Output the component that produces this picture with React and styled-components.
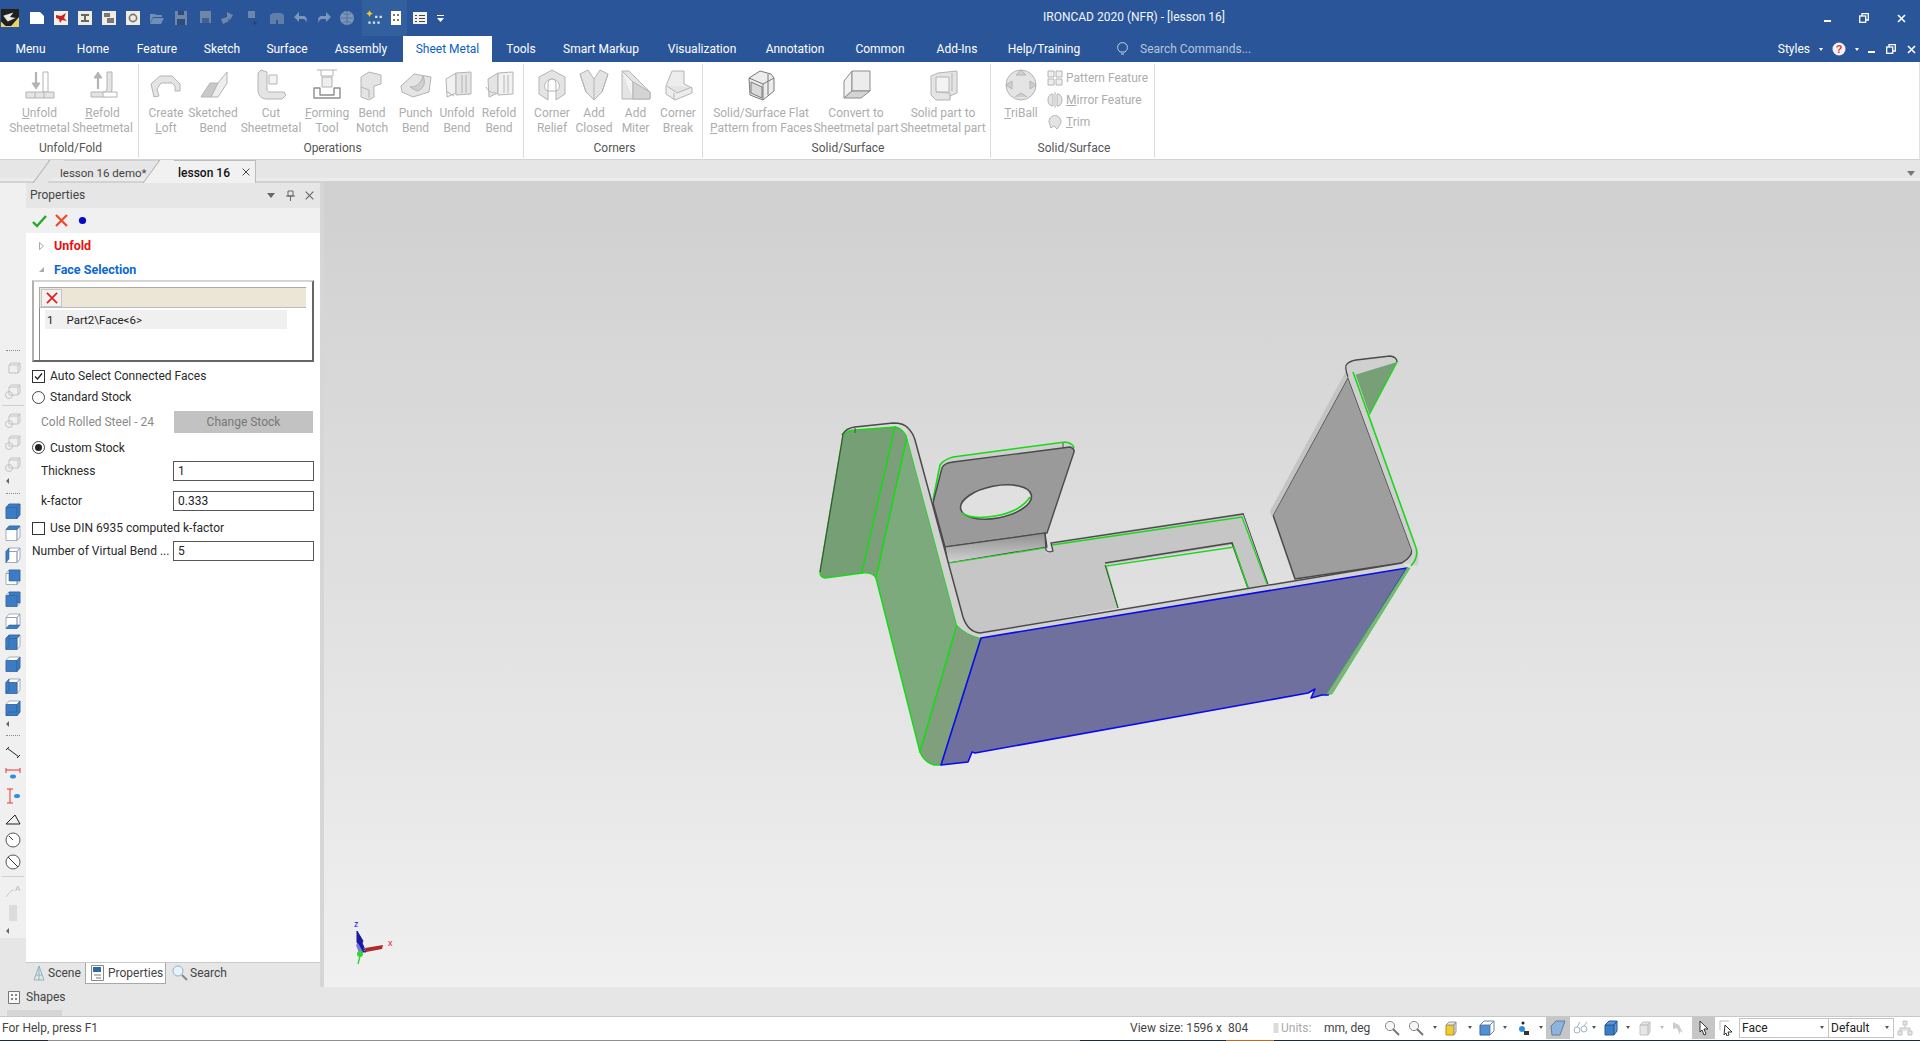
import React from 'react'
import styled, { createGlobalStyle } from 'styled-components'

const GlobalStyle = createGlobalStyle`
  html, body { margin: 0; padding: 0; height: 100%; overflow: hidden; }
  body { font-family: Roboto, "Liberation Sans", sans-serif; font-size: 12px; color: #222; }
  #root { height: 100%; }
  * { box-sizing: border-box; }
  svg { display: block; flex: none; }
`

const Page = styled.div`
  height: 100vh;
  display: flex;
  flex-direction: column;
  background: #e6e6e6;
`

/* ---------- title bar ---------- */
const TitleBar = styled.div`
  height: 36px;
  flex: none;
  display: flex;
  align-items: center;
  background: #2a5699;
  color: #fff;
`
const QuickBar = styled.div`
  display: flex;
  align-items: center;
  height: 36px;
  width: 1043px;
`
const QuickSlot = styled.div`
  width: ${p => p.$w || 24}px;
  height: ${p => (p.$on ? 36 : 24)}px;
  display: flex;
  align-items: center;
  justify-content: center;
  background: ${p => (p.$on ? '#32609f' : 'transparent')};
  margin-right: ${p => p.$mr || 0}px;
`
const WindowTitle = styled.div`
  flex: 1;
  font-size: 12px;
  color: #f2f5fa;
  padding-bottom: 2px;
`
const WinButtons = styled.div`
  display: flex;
  align-items: center;
  gap: ${p => p.$gap}px;
  padding-right: ${p => p.$right}px;
`

/* ---------- menu tabs ---------- */
const TabRow = styled.div`
  height: 26px;
  flex: none;
  display: flex;
  align-items: stretch;
  background: #2a5699;
`
const MenuTab = styled.div`
  width: ${p => p.$w}px;
  flex: none;
  display: flex;
  align-items: center;
  justify-content: center;
  font-size: 12px;
  color: ${p => (p.$active ? '#0a5fc4' : '#fff')};
  background: ${p => (p.$active ? '#fff' : 'transparent')};
`
const SearchBox = styled.div`
  display: flex;
  align-items: center;
  gap: 12px;
  margin-left: 21px;
  color: #b5c4dc;
  font-size: 12px;
  flex: 1;
`
const StylesBox = styled.div`
  display: flex;
  align-items: center;
  color: #fff;
  padding-right: 4px;
`

/* ---------- ribbon ---------- */
const Ribbon = styled.div`
  height: 98px;
  flex: none;
  display: flex;
  background: #fff;
  border-bottom: 1px solid #d2d2d2;
  border-right: 1px solid #e2e2e2;
  padding: 2px 0 1px;
`
const RibbonGroup = styled.div`
  width: ${p => p.$w}px;
  flex: none;
  display: flex;
  flex-direction: column;
  border-right: 1px solid #dcdcdc;
`
const GroupBody = styled.div`
  flex: 1;
  display: flex;
  padding-left: ${p => p.$left}px;
`
const GroupLabel = styled.div`
  height: 18px;
  padding-left: 3px;
  text-align: center;
  color: #555;
  font-size: 12px;
  line-height: 16px;
`
const BigButton = styled.div`
  width: ${p => p.$w}px;
  flex: none;
  display: flex;
  flex-direction: column;
  align-items: center;
  padding-top: 5px;
  color: #adadad;
  font-size: 12px;
  line-height: 15px;
  text-align: center;
  white-space: nowrap;
  svg { margin-bottom: 5px; }
`
const SmallColumn = styled.div`
  display: flex;
  flex-direction: column;
  gap: 6px;
  padding-top: 6px;
  margin-left: 4px;
`
const SmallButton = styled.div`
  display: flex;
  align-items: center;
  gap: 3px;
  height: 16px;
  color: #adadad;
  white-space: nowrap;
`

/* ---------- document tabs ---------- */
const DocBar = styled.div`
  height: 23px;
  flex: none;
  position: relative;
  display: flex;
  padding-left: 48px;
  background: linear-gradient(#e6e6e6 0 18px, #ececec 18px 21px, #d2d2d2 21px);
`
const DocTab = styled.div`
  position: relative;
  height: 23px;
  width: ${p => p.$w}px;
  display: flex;
  align-items: center;
  padding-left: ${p => p.$pad}px;
  padding-top: 1px;
  font-size: ${p => (p.$active ? 12 : 11.5)}px;
  color: ${p => (p.$active ? '#111' : '#444')};
  font-weight: ${p => (p.$active ? 500 : 400)};
  background: ${p => (p.$active ? '#f1f1f1' : 'transparent')};
  border-top: 1px solid ${p => (p.$active ? '#bdbdbd' : '#cfcfcf')};
  border-right: 1px solid ${p => (p.$active ? '#bdbdbd' : 'transparent')};
  &::before {
    content: '';
    position: absolute;
    left: -7px;
    top: -1px;
    width: 14px;
    height: 23px;
    background: ${p => (p.$active ? '#f1f1f1' : '#e6e6e6')};
    border-left: 1px solid #aaa;
    transform: skewX(-36deg);
    z-index: 0;
  }
  span { position: relative; z-index: 1; }
`
const DocClose = styled.div`
  position: absolute;
  right: 5px;
  top: 7px;
`
const DocMenu = styled.div`
  position: absolute;
  right: 5px;
  top: 11px;
  width: 0;
  height: 0;
  border-left: 4px solid transparent;
  border-right: 4px solid transparent;
  border-top: 5px solid #777;
`

/* ---------- main ---------- */
const Main = styled.div`
  flex: 1;
  min-height: 0;
  display: flex;
`
const Dock = styled.div`
  width: 324px;
  flex: none;
  display: flex;
  border-right: 4px solid #d6d6d6;
  background: #e6e6e6;
`
const SideBar = styled.div`
  width: 26px;
  flex: none;
  height: 755px;
  background: #f0f0f0;
  display: flex;
  flex-direction: column;
  align-items: center;
  padding-top: 167px;
`
const SideSlot = styled.div`
  height: 22px;
  display: flex;
  align-items: center;
  justify-content: center;
`
const SideDots = styled.div`
  width: 14px;
  height: ${p => p.$h || 8}px;
  flex: none;
  border-top: 1px dotted #8a8a8a;
  margin-top: ${p => p.$top || 0}px;
`
const SideRule = styled.div`
  width: 22px;
  height: 1px;
  flex: none;
  margin: 3px 0;
  background: #cfcfcf;
`
const SideArrow = styled.div`
  width: 14px;
  height: ${p => p.$h || 14}px;
  flex: none;
  display: flex;
  align-items: center;
  &::before {
    content: '';
    border-top: 3px solid transparent;
    border-bottom: 3px solid transparent;
    border-right: 3px solid #666;
  }
`
const Panel = styled.div`
  flex: 1;
  min-width: 0;
  display: flex;
  flex-direction: column;
`
const PanelHead = styled.div`
  height: 25px;
  flex: none;
  display: flex;
  align-items: center;
  padding: 0 6px 1px 4px;
  color: #444;
  background: #e6e6e6;
`
const PanelName = styled.div`
  flex: 1;
`
const PanelTools = styled.div`
  display: flex;
  align-items: center;
  gap: 10px;
`
const ConfirmRow = styled.div`
  height: 25px;
  flex: none;
  display: flex;
  align-items: center;
  gap: 8px;
  padding-left: 6px;
  background: #f0f0f0;
`
const PanelBody = styled.div`
  flex: 1;
  background: #fff;
  padding: 0 6px;
  display: flex;
  flex-direction: column;
`
const Section = styled.div`
  height: ${p => p.$h}px;
  flex: none;
  display: flex;
  align-items: center;
  padding-left: 7px;
  gap: 10px;
  font-weight: 700;
  font-size: 12.5px;
  color: ${p => p.$color};
`
const Tri = styled.div`
  width: 5px;
  height: 8px;
`
const SelectBox = styled.div`
  height: 82px;
  width: 282px;
  flex: none;
  border: 2px solid;
  border-color: #d4d4d4 #666 #666 #b0b0b0;
  padding: 5px 6px 0 5px;
  margin-bottom: 3px;
  display: flex;
  flex-direction: column;
`
const SelectTools = styled.div`
  height: 21px;
  flex: none;
  background: #ece6d6;
  border-top: 1px solid #aaa;
  border-bottom: 1px solid #bbb;
  border-left: 1px solid #aaa;
  padding: 1px;
`
const SelectDelete = styled.div`
  width: 21px;
  height: 18px;
  background: #f2f2f2;
  border: 1px solid #c4c4c4;
  display: flex;
  align-items: center;
  justify-content: center;
`
const SelectList = styled.div`
  flex: 1;
  border-left: 1px solid #888;
  padding: 2px 0 0 5px;
`
const SelectRow = styled.div`
  width: 242px;
  height: 19px;
  display: flex;
  align-items: center;
  gap: 13px;
  padding-left: 2px;
  background: #f0f0f0;
  color: #222;
  font-size: 11.5px;
`
const OptionRow = styled.div`
  height: ${p => p.$h || 21}px;
  flex: none;
  display: flex;
  align-items: center;
  gap: 5px;
  color: #2a2a2a;
`
const CheckBox = styled.div`
  width: 13px;
  height: 13px;
  border: 1px solid #333;
  background: #fff;
  display: flex;
  align-items: center;
  justify-content: center;
`
const Radio = styled.div`
  width: 13px;
  height: 13px;
  border-radius: 50%;
  border: 1px solid #444;
  background: #fff;
  display: flex;
  align-items: center;
  justify-content: center;
  &::after {
    content: '';
    width: 7px;
    height: 7px;
    border-radius: 50%;
    background: ${p => (p.$on ? '#222' : 'transparent')};
  }
`
const FieldRow = styled.div`
  height: ${p => p.$h}px;
  flex: none;
  display: flex;
  align-items: center;
`
const FieldName = styled.div`
  width: 141px;
  flex: none;
  padding-left: ${p => p.$left ?? 9}px;
  color: ${p => (p.$muted ? '#8a8a8a' : '#2a2a2a')};
  white-space: nowrap;
`
const FieldInput = styled.div`
  width: 141px;
  height: 20px;
  border: 1px solid #555;
  padding-left: 4px;
  line-height: 18px;
  background: #fff;
`
const GreyButton = styled.div`
  width: 139px;
  height: 22px;
  margin-left: 1px;
  background: #c2c2c2;
  color: #777;
  text-align: center;
  line-height: 22px;
`
const DockTabs = styled.div`
  height: 25px;
  flex: none;
  display: flex;
  align-items: flex-start;
  background: #e6e6e6;
  border-top: 1px solid #c9c9c9;
`
const DockTab = styled.div`
  height: 21px;
  width: ${p => p.$w}px;
  display: flex;
  align-items: center;
  gap: ${p => p.$gap || 4}px;
  padding-left: ${p => p.$left}px;
  color: #444;
  background: ${p => (p.$active ? '#fff' : 'transparent')};
  border: 1px solid ${p => (p.$active ? '#a9a9a9' : 'transparent')};
  border-top: none;
`
const Viewport = styled.div`
  flex: 1;
  min-width: 0;
  background: linear-gradient(#d0d0d0, #f0f0f0);
  svg { width: 100%; height: 100%; }
`
const ShapesBar = styled.div`
  height: 29px;
  flex: none;
  position: relative;
  display: flex;
  align-items: flex-start;
  gap: 4px;
  padding: 3px 0 0 8px;
  color: #444;
  background: #e6e6e6;
  &::after {
    content: '';
    position: absolute;
    left: 7px;
    bottom: 0;
    width: 55px;
    height: 6px;
    background: #d6d6d6;
  }
`
const StatusBar = styled.div`
  height: 24px;
  flex: none;
  display: flex;
  align-items: center;
  background: #fff;
  border-top: 1px solid #c8c8c8;
  color: #333;
  padding: 0 0 2px 2px;
`
const StatusText = styled.div`
  width: ${p => p.$w}px;
  flex: none;
  white-space: nowrap;
  color: ${p => (p.$muted ? '#aaa' : '#444')};
  margin-left: ${p => p.$left || 0}px;
`
const StatusSlot = styled.div`
  width: ${p => p.$w}px;
  height: 22px;
  flex: none;
  display: flex;
  align-items: center;
  justify-content: center;
  background: ${p => (p.$on ? '#c6c6c6' : 'transparent')};
`
const Caret = styled.div`
  width: ${p => p.$w || 8}px;
  flex: none;
  display: flex;
  justify-content: center;
  &::before {
    content: '';
    border-left: ${p => p.$size || 2}px solid transparent;
    border-right: ${p => p.$size || 2}px solid transparent;
    border-top: ${p => (p.$size || 2) + 1}px solid ${p => p.$color || '#555'};
  }
`
const Combo = styled.div`
  width: ${p => p.$w}px;
  height: 20px;
  flex: none;
  display: flex;
  align-items: center;
  justify-content: space-between;
  padding: 0 3px 0 2px;
  border: 1px solid #c4c4c4;
  border-left-width: ${p => (p.$join ? 0 : 1)}px;
  color: #222;
`
const Taskbar = styled.div`
  height: 1px;
  flex: none;
  background: linear-gradient(90deg, #1c2b36 48px, #8b9095 48px, #8b9095 1080px, #1c2b36 1080px, #1c2b36 1226px, #c46a1e 1226px, #c46a1e 1274px, #1c2b36 1274px);
`

/* ---------- small drawings ---------- */
const Box = ({ s = 16, children, v = 16 }) => (
  <svg width={s} height={s} viewBox={`0 0 ${v} ${v}`}>{children}</svg>
)

const quick = {
  logo: (
    <Box s={18}>
      <rect width="16" height="16" fill="#e9d46a" />
      <path d="M0 0h16v7L9 15H4L0 11z" fill="#20201e" />
      <path d="M2 6l9-3-3 4 5 1-7 3z" fill="#e8e8e8" />
    </Box>
  ),
  sheet: <Box><path d="M1 2h10l4 4v8H1z" fill="#fff" /></Box>,
  star: <Box><path d="M1 1h14v14H1z" fill="#f3f0e6" /><path d="M3 5l5 1 5-3-2 5 3 3-5-1-2 3-1-4-3-1z" fill="#d01c24" /></Box>,
  part: <Box><path d="M1 1h14v14H1z" fill="#efece2" /><path d="M4 4h8v2H9v4h3v2H4v-2h3V6H4z" fill="#666" /></Box>,
  drw: <Box><path d="M1 1h14v14H1z" fill="#efece2" /><path d="M3 3h6v4H3zM6 8h7v5H6z" fill="#777" /></Box>,
  cog: <Box><path d="M1 1h14v14H1z" fill="#efece2" /><circle cx="8" cy="8" r="3.6" fill="none" stroke="#777" strokeWidth="1.6" /></Box>,
  open: <Box><path d="M1 4h5l1 1h6v2H4L1 13z M4 8h11l-3 6H1z" fill="#6f8fb9" /></Box>,
  save: <Box><path d="M2 1h12v14H2z" fill="#6d86a9" /><path d="M5 1h6v4H5zM4 9h8v6H4z" fill="#2c4c79" /></Box>,
  saveAll: <Box><path d="M3 1h11v12H3z" fill="#6d86a9" /><path d="M5 8h7v5H5z" fill="#3e618f" /></Box>,
  plot: <Box><path d="M1 9l6-2 2 4-6 3zM7 2l6 3-3 5-3-2z" fill="#6d86a9" /></Box>,
  print: <Box><path d="M5 1h7v7H5z" fill="#6d86a9" /><path d="M12 11v4M10 13h4" stroke="#27406b" /></Box>,
  shop: <Box><path d="M1 5l3-2h8l3 2v9H9v-4H7v4H1z" fill="#5f7ea9" /></Box>,
  undo: <Box><path d="M6 2L1 7l5 5V9h4c2 0 3 1 3 4 2-5 0-7-3-7H6z" fill="#7b96bb" /></Box>,
  redo: <Box><path d="M10 2l5 5-5 5V9H6c-2 0-3 1-3 4-2-5 0-7 3-7h4z" fill="#7b96bb" /></Box>,
  globe: <Box><circle cx="8" cy="8" r="7" fill="#7b96bb" /><path d="M2 8h12M8 1v14M4 3c3 2 5 2 8 0M4 13c3-2 5-2 8 0" stroke="#54739f" fill="none" /></Box>,
  spark: <Box s={18}><path d="M4 1l1 2 2 1-2 1-1 2-1-2-2-1 2-1z" fill="#f2c521" /><path d="M9 6h2v2H9zM13 6h2v2h-2zM7 11h2v2H7zM11 11h2v2h-2zM3 11h2v2H3z" fill="#d9e6f6" /></Box>,
  grid: <Box><path d="M3 1h10v14H3z" fill="#fff" /><path d="M5 4h2v2H5zM9 4h2v2H9zM5 9h2v2H5zM9 9h2v2H9z" fill="#777" /></Box>,
  list: <Box><path d="M1 2h14v12H1z" fill="#f2f2f2" /><path d="M3 5h2v1H3zM7 5h6v1H7zM3 8h2v1H3zM7 8h6v1H7zM3 11h2v1H3zM7 11h6v1H7z" fill="#444" /></Box>,
}

const Quick = [
  ['logo', 20, 5], ['sheet', 24], ['star', 24], ['part', 24], ['drw', 24], ['cog', 24], ['open', 24], ['save', 24],
  ['saveAll', 24], ['plot', 22], ['print', 24, 2], ['shop', 24], ['undo', 23], ['redo', 24], ['globe', 22, 4],
].map(([name, w, mr]) => ({ name, w, mr }))

const leftTabs = [['Menu', 61], ['Home', 64], ['Feature', 64], ['Sketch', 66], ['Surface', 64], ['Assembly', 84]]
const rightTabs = [['Tools', 58], ['Smart Markup', 102], ['Visualization', 100], ['Annotation', 86], ['Common', 84], ['Add-Ins', 70], ['Help/Training', 104]]

const WinMin = ({ c = '#fff' }) => <svg width="7" height="10" viewBox="0 0 7 10"><rect y="7" width="7" height="2" fill={c} /></svg>
const WinRestore = () => (
  <svg width="10" height="10" viewBox="0 0 10 10" fill="none" stroke="#fff" strokeWidth="1.3">
    <rect x=".7" y="3" width="6" height="6.3" /><path d="M3 3V.7h6.3V7H7" />
  </svg>
)
const WinClose = () => (
  <svg width="9" height="9" viewBox="0 0 9 9" stroke="#fff" strokeWidth="1.6"><path d="M1 1l7 7M8 1L1 8" /></svg>
)

const L = { fill: '#e4e4e4', stroke: '#b4b4b4', strokeWidth: 1, strokeLinejoin: 'round' }
const Big = ({ children }) => <svg width="32" height="32" viewBox="0 0 32 32" {...L}>{children}</svg>

const big = {
  unfold: <Big><path d="M12 3v14" strokeWidth="2.2" fill="none" /><path d="M8 14l4 6 4-6z" fill="#b4b4b4" /><path d="M19 3h5v20h-5z" fill="#fff" /><path d="M2 23h28v6H2z" /><path d="M11 23v6M20 23v6" /></Big>,
  refold: <Big><path d="M11 20V6" strokeWidth="2.2" fill="none" /><path d="M7 9l4-6 4 6z" fill="#b4b4b4" /><path d="M20 3h5v16c0 6-3 9-9 9H4v-5h12c3 0 4-1 4-4z" /><path d="M16 23h14v5H16z" fill="#fff" /></Big>,
  loft: <Big><path d="M1 15l9-8h12l8 8v7h-5v-5l-3-3H11l-4 6 2 7-5 1z" /><path d="M22 7l8 8" /></Big>,
  sketched: <Big><path d="M4 28l9-14h8l-7 14z" fill="#c9c9c9" /><path d="M21 14l9-11v11l-9 14h-7z" fill="#eee" /></Big>,
  cut: <Big><path d="M6 1l6 2v17c0 2 1 3 3 3h14l2 3-4 4H12c-6 0-9-4-9-9V4z" /><path d="M14 6h8v9h-8z" fill="#f4f4f4" /></Big>,
  forming: <Big><path d="M6 1h20M10 1v6h12V1" fill="none" /><path d="M11 8h10v10H11z" fill="#efefef" /><path d="M3 19h6v7h14v-7h6v10H3z" fill="#fff" stroke="#8e8e8e" strokeWidth="1.4" /></Big>,
  notch: <Big><path d="M5 8l8-5 12 3v9l-7 2v11l-5 3-8-3z" /><path d="M5 18l8 3v8" /></Big>,
  punch: <Big><path d="M1 17L14 5l17 3-2 15-16 5L2 23z" /><path d="M10 18c6 0 11-3 13-11 3 7 1 13-6 15z" fill="#cfcfcf" /></Big>,
  unfoldBend: <Big><path d="M5 10l10-6v20l-9 4z" fill="#f1f1f1" /><path d="M15 4l15-1v22l-15 1z" /><path d="M5 22l8 5M21 6v18M25 6v18" /></Big>,
  refoldBend: <Big><path d="M5 10l10-6v20l-9 4z" /><path d="M15 4l15-1v22l-15 1z" fill="#f1f1f1" /><path d="M3 18c2 4 5 6 10 6" fill="none" /><path d="M21 6v18M25 6v18" /></Big>,
  relief: <Big><path d="M16 1l13 7v17l-9 6v-9c3-1 4-4 3-7s-4-5-7-5-6 2-7 5 0 6 3 7v9L3 25V8z" /><path d="M12 14a4 4 0 018 0v8h-8z" fill="#fff" /></Big>,
  closed: <Big><path d="M2 5l8-4 6 9 6-9 8 4-6 18-8 8-8-8z" /><path d="M16 10v21M2 5l6 18M30 5l-6 18" /></Big>,
  miter: <Big><path d="M2 2h7l21 21v7H2z" /><path d="M2 2l11 11v17" fill="#f3f3f3" /><path d="M13 13l17 10v7H13z" fill="#d4d4d4" /></Big>,
  corner: <Big><path d="M10 2h12v13l8 4v5l-17 7-9-6v-8z" fill="#ededed" /><path d="M5 17l10 7 15-6M12 24v7" /></Big>,
  flat: <Big stroke="#777"><path d="M4 9l11-7 11 3 3 4v13L18 31 5 26z" stroke="#7a7a7a" fill="#ececec" /><path d="M4 9l14 6v16M18 15l11-6M23 5v21" stroke="#7a7a7a" fill="none" /><path d="M6 13l11 5v11L6 24z" fill="#dadada" stroke="#7a7a7a" /></Big>,
  convert: <Big><path d="M4 12L12 2v20l-8 7z" fill="#f1f1f1" stroke="#8d8d8d" /><path d="M12 2h18v20H12z" fill="#ececec" stroke="#8d8d8d" /><path d="M4 29h17l9-7H12z" fill="#d4d4d4" stroke="#8d8d8d" /></Big>,
  solid: <Big><path d="M4 7l7-3 19-2v22l-7 3v4H9L4 26z" /><path d="M9 8h13v15H9zM25 4v18" fill="#f3f3f3" /><path d="M9 23l14 1v6" /></Big>,
  triball: <Big><circle cx="16" cy="16" r="15" /><path d="M16 1l5 5h-10zM1 16l6-4v8zM31 16l-6-4v8zM10 28l6-4 6 4" fill="#cfcfcf" /></Big>,
}

const Small = ({ kind }) => (
  <svg width="16" height="16" viewBox="0 0 16 16" {...L}>
    {kind === 'pattern' && <path d="M1 1h6v6H1zM9 1h6v6H9zM1 9h6v6H1zM9 9h6v6H9z" fill="#eee" />}
    {kind === 'mirror' && <path d="M1 8c0-4 2-6 5-6v12c-3 0-5-2-5-6zM15 8c0-4-2-6-5-6v12c3 0 5-2 5-6zM8 0v16" />}
    {kind === 'trim' && <path d="M2 8a6 6 0 1 1 10 4l-2 3-3-3-3 2z" />}
  </svg>
)

const faces = {
  back: 'M4 1h11v11H4z',
  left: 'M1 4.500L4 1v11l-3 3.500z',
  bottom: 'M1 15.500L4 12h11l-3 3.500z',
  front: 'M1 4.500h11v11H1z',
  top: 'M1 4.500L4 1h11l-3 3.500z',
  right: 'M12 4.500L15 1v11l-3 3.500z',
}
// blue faces of the little view cubes
const Cube = ({ on }) => (
  <svg width="16" height="16" viewBox="0 0 16 16" strokeLinejoin="round">
    <path d="M1 4.500h11v11H1zM12 4.500L15 1v11l-3 3.500zM1 4.500L4 1h11l-3 3.500z" fill="#fff" stroke="#8f9db0" strokeWidth=".8" />
    {on.map(f => <path key={f} d={faces[f]} fill="#3b7cc4" stroke="#2f5f9a" strokeWidth=".6" />)}
  </svg>
)
const GhostCube = ({ circle }) => (
  <svg width="16" height="16" viewBox="0 0 16 16" fill="none" stroke="#c2c2c2">
    <path d="M4 4h9v8H4zM4 4l2-2h9l-2 2M13 12l2-2V2" />
    {circle && <circle cx="4" cy="12" r="3.5" />}
  </svg>
)

const sideTop = [<GhostCube key="a" />, <GhostCube key="b" circle />]
const sideMid = [<GhostCube key="a" circle />, <GhostCube key="b" circle />, <GhostCube key="c" circle />]
const sideCubes = [
  ['front', 'top', 'right'], ['top'], ['left'], ['back'], ['back', 'front'], ['bottom'],
  ['front', 'top', 'left'], ['front', 'right'], ['front', 'left'], ['front', 'right', 'bottom'],
]

const dimIcons = [
  <Box key="1"><path d="M2 4l12 9M1 6l3-3M12 14l3-3" stroke="#222" fill="none" /></Box>,
  <Box key="2"><path d="M1 4h14M1 2v5M15 2v5" stroke="#e33" fill="none" /><ellipse cx="8" cy="10.5" rx="3" ry="2" fill="#2e8fe0" /></Box>,
  <Box key="3"><path d="M5 1v14M2 1h6M2 15h6" stroke="#e33" fill="none" /><ellipse cx="12" cy="8" rx="3" ry="2" fill="#2e8fe0" /></Box>,
  <Box key="4"><path d="M1 14h14M1 14L10 5l5 9" stroke="#222" fill="none" /></Box>,
  <Box key="5"><circle cx="8" cy="8" r="7" fill="#fff" stroke="#555" /><path d="M8 8L4 4" stroke="#333" /></Box>,
  <Box key="6"><circle cx="8" cy="8" r="7" fill="#fff" stroke="#555" /><path d="M3 3l10 10" stroke="#333" /></Box>,
]

const Tick = () => (
  <svg width="15" height="14" viewBox="0 0 15 14"><path d="M1 8l4 4L14 2" fill="none" stroke="#26a828" strokeWidth="2.4" /></svg>
)
const Cross = ({ s = 13, w = 2.2, c = '#ec4a2c' }) => (
  <svg width={s} height={s} viewBox="0 0 13 13"><path d="M1 1l11 11M12 1L1 12" stroke={c} strokeWidth={w} /></svg>
)

/* ---------- the part in the viewport, in page coordinates ---------- */
const GR = '#19d819'
const DK = '#4a4a4a'
const BL = '#0a0aee'

const Model = () => (
  <svg viewBox="324 183 1596 804" preserveAspectRatio="none">
    <defs>
      <linearGradient id="bend" x1="0" y1="0" x2="0" y2="1">
        <stop offset="0" stopColor="#8f8f8f" />
        <stop offset="1" stopColor="#d2d2d2" />
      </linearGradient>
    </defs>

    {/* rear lip of the tab */}
    <path d="M933 503L940 465Q943 460 953 457L1065 442Q1073 443 1073 447L1074 452L942 468z" fill="#d0d0d0" />
    <path d="M933 500L940 465Q943 460 953 457L1065 442Q1073 443 1074 448" fill="none" stroke={GR} strokeWidth="1.6" />
    <path d="M1063 443v5" stroke={DK} />

    {/* tab with the hole */}
    <path d="M942 468Q944 463 953 462L1070 447Q1075 449 1074 452L1047 533L945 547L933 503z" fill="#9a9a9a" stroke={DK} strokeWidth="1.4" strokeLinejoin="round" />
    <ellipse cx="996" cy="502" rx="36" ry="16" transform="rotate(-11 996 502)" fill="#e0e0e0" stroke={DK} strokeWidth="1.6" />
    <path d="M962 513Q972 520 995 516Q1020 512 1030 497" fill="none" stroke={GR} strokeWidth="1.6" />
    <path d="M945 547L1045 533L1047 547L948 563z" fill="url(#bend)" stroke={DK} strokeWidth="1.2" />

    {/* floor with the cut outs */}
    <path d="M948 563L1045 548L1046 552Q1047 553 1052 552L1050 542L1243 513L1268 584L1248 588L1232 545L1105 565L1118 608L980 633Q968 632 963 617z" fill="#c6c6c6" />
    <path d="M950 563L1045 548" stroke={GR} strokeWidth="1.2" fill="none" />
    <path d="M1045 533L1046 550Q1048 553 1053 551L1051 543L1243 514" fill="none" stroke={DK} strokeWidth="1.3" />
    <path d="M1052 545L1242 517L1267 584" fill="none" stroke={GR} strokeWidth="1.3" />
    <path d="M1243 513L1268 584" fill="none" stroke={DK} strokeWidth="1" />
    <path d="M1105 563L1232 543L1248 588" fill="none" stroke={DK} strokeWidth="1.6" />
    <path d="M1248 588L1234 547L1106 566L1118 608" fill="none" stroke={GR} strokeWidth="1.3" />
    <path d="M1105 565L1118 608" fill="none" stroke={DK} strokeWidth="1" />

    {/* right flange */}
    <path d="M1348 377L1273 515L1295 579L1402 563Q1412 557 1412 550z" fill="#9e9e9e" stroke={DK} strokeWidth="1.5" strokeLinejoin="round" />
    <path d="M1272 517L1270 511L1346 371Q1347 366 1348 377z" fill="#c4c4c4" />
    <path d="M1353 368L1397 362L1368 417z" fill="#77a077" stroke={GR} strokeWidth="1.3" />
    <path d="M1348 377Q1344 366 1347 364Q1350 361 1356 360L1390 356Q1397 357 1397 362" fill="#d0d0d0" stroke={DK} strokeWidth="1.3" />
    <path d="M1348 377L1412 550Q1414 556 1404 563L1418 566Q1420 552 1416 547L1354 370z" fill="#d0d0d0" />
    <path d="M1353 372L1415 545Q1420 556 1411 566" fill="none" stroke={GR} strokeWidth="1.6" />

    {/* green outer faces */}
    <path d="M843 435Q848 430 855 430L895 427L862 573L825 578Q820 577 820 572z" fill="#769f76" stroke={GR} strokeWidth="1.5" />
    <path d="M895 427Q902 428 907 437L876 578Q873 572 862 573z" fill="#7c9e7a" stroke={GR} strokeWidth="1.3" />
    <path d="M907 437L957 625L920 752L876 578z" fill="#7caa7c" stroke={GR} strokeWidth="1.5" strokeLinejoin="round" />
    <path d="M957 625Q965 634 981 638L941 765H934Q924 762 920 752z" fill="#7f9f7d" stroke={GR} strokeWidth="1.4" />
    <path d="M843 435L820 572" stroke={DK} strokeWidth="1.2" fill="none" />

    {/* front lip and curved corner */}
    <path d="M907 437L957 625Q965 634 981 638L1407 568L1402 563L980 633Q968 632 963 617L915 440Q912 431 907 428z" fill="#d2d2d2" />
    <path d="M842 435Q846 428 855 427L893 423Q904 423 908 428Q913 433 915 440L963 617Q968 632 980 633L1402 563" fill="none" stroke={DK} strokeWidth="1.5" />
    <path d="M855 428v5" stroke={DK} />

    {/* blue face */}
    <path d="M1407 568L1328 695H1322L1311 698L1315 689L1308 693L975 753L972 752L968 762L941 765L981 638z" fill="#70709f" stroke={BL} strokeWidth="1.6" strokeLinejoin="round" />
    <path d="M1410 568L1332 694H1327L1407 568z" fill="#8bab89" stroke={GR} strokeWidth=".7" />

    {/* triad */}
    <path d="M357 931l6 10-1 2 4 9-5 0-4-10z" fill="#1b1b9a" stroke="#1b1b9a" />
    <path d="M358 943l5 9-4 1-3-8z" fill="#7a7ae0" />
    <path d="M364 948l1 6" stroke="#aaa" strokeDasharray="1 1" />
    <path d="M365 948l18-3 -1 4 -16 3z" fill="#b02a2a" />
    <circle cx="360" cy="954" r="3" fill="#2ed82e" />
    <path d="M360 956l-2 8" stroke="#2ed82e" strokeWidth="1.4" />
    <text x="354" y="927" fontSize="9" fontFamily="Liberation Sans, sans-serif" fill="#1414e0">z</text>
    <text x="388" y="946" fontSize="9" fontFamily="Liberation Sans, sans-serif" fill="#e02020">x</text>
  </svg>
)

const statusIcon = {
  mag: <Box><circle cx="6" cy="6" r="4.6" fill="#f4f6f8" stroke="#8a8a8a" /><path d="M9 9l6 6" stroke="#777" strokeWidth="2" /></Box>,
  box: <Box><path d="M3 5h8v10H3z" fill="#f2cb2c" stroke="#b0931a" /><path d="M3 5l3-3h7l-2 3zM11 5l2-3v10l-2 3z" fill="#e6e6e6" stroke="#999" /></Box>,
  blue: <Box><path d="M1 5h10v10H1z" fill="#4f90d6" stroke="#2f6299" /><path d="M1 5l4-4h10l-4 4zM11 5l4-4v10l-4 4z" fill="#fff" stroke="#6d86a9" /></Box>,
  person: <Box><circle cx="7" cy="3" r="1.5" fill="#222" /><circle cx="6" cy="9" r="3" fill="#2f8fde" /><path d="M8 11h5v4H8z" fill="#333" /></Box>,
  slant: <Box><path d="M1 6l5-5h9l-5 14H2z" fill="#8fb4dc" stroke="#5d7ea7" /></Box>,
  glass: <Box><circle cx="4" cy="10" r="3" fill="none" stroke="#9fb2c6" /><circle cx="11" cy="9" r="3" fill="none" stroke="#9fb2c6" /><path d="M4 7l3-5M11 6l3-4" stroke="#9fb2c6" /></Box>,
  solid: <Box><path d="M2 5h9v10H2z" fill="#3b7cc4" stroke="#275d99" /><path d="M2 5l4-4h8l-3 4zM11 5l3-4v10l-3 4z" fill="#5b97d8" stroke="#275d99" /></Box>,
  ghost: <Box><path d="M3 5h8v10H3zM3 5l3-3h7l-2 3zM11 5l2-3v10l-2 3z" fill="#e6e6e6" stroke="#c4c4c4" /></Box>,
  fade: <Box><path d="M3 2l6 3 4 8-3-2v4L7 8 3 9z" fill="#cdcdcd" /></Box>,
  arrow: <Box><path d="M4 1l8 8H8l2 5-2 1-2-5-2 2z" fill="#fff" stroke="#333" /></Box>,
  arrow2: <Box><path d="M1 1h9M1 1v9" stroke="#bbb" fill="none" /><path d="M6 5l7 7H9l1 3-2 1-1-3-2 2z" fill="#fff" stroke="#333" /></Box>,
  tree: <Box><path d="M6 1h4v4H6zM1 11h4v4H1zM11 11h4v4h-4zM8 5v3M3 11V8h10v3" fill="#e4e4e4" stroke="#c4c4c4" /></Box>,
}

export default function App() {
  return (
    <Page>
      <GlobalStyle />
      <TitleBar>
        <QuickBar>
          {Quick.map(q => (
            <QuickSlot key={q.name} $w={q.w} $mr={q.mr}>{quick[q.name]}</QuickSlot>
          ))}
          <QuickSlot $w={23} $on>{quick.spark}</QuickSlot>
          <QuickSlot $w={22} $on $mr={1}>{quick.grid}</QuickSlot>
          <QuickSlot $w={24}>{quick.list}</QuickSlot>
          <QuickSlot $w={16}>
            <svg width="7" height="7" viewBox="0 0 7 7" fill="#fff"><path d="M0 0h7v1H0zM0 3h7L3.5 7z" /></svg>
          </QuickSlot>
        </QuickBar>
        <WindowTitle>IRONCAD 2020 (NFR) - [lesson 16]</WindowTitle>
        <WinButtons $gap={28} $right={14}>
          <WinMin />
          <WinRestore />
          <WinClose />
        </WinButtons>
      </TitleBar>

      <TabRow>
        {leftTabs.map(([t, w]) => <MenuTab key={t} $w={w}>{t}</MenuTab>)}
        <MenuTab $active $w={89}>Sheet Metal</MenuTab>
        {rightTabs.map(([t, w]) => <MenuTab key={t} $w={w}>{t}</MenuTab>)}
        <SearchBox>
          <svg width="11" height="14" viewBox="0 0 11 14" fill="none" stroke="#c8d4e6">
            <path d="M3 10C1 8 .6 6.800.6 5.500a4.900 4.900 0 019.800 0C10.400 6.800 10 8 8 10zM4 12h3" />
          </svg>
          Search Commands...
        </SearchBox>
        <StylesBox>
          Styles
          <Caret $w={22} $color="#fff" />
          <svg width="14" height="14" viewBox="0 0 14 14">
            <circle cx="7" cy="7" r="6.500" fill="#f3f3f3" />
            <text x="7" y="11" textAnchor="middle" fontSize="11" fontWeight="700" fontFamily="Liberation Sans, sans-serif" fill="#e2344a">?</text>
          </svg>
          <Caret $w={22} $color="#fff" />
          <WinButtons $gap={11} $right={0}>
            <WinMin />
            <WinRestore />
            <WinClose />
          </WinButtons>
        </StylesBox>
      </TabRow>

      <Ribbon>
        <RibbonGroup $w={139}>
          <GroupBody $left={8}>
            <BigButton $w={63}>{big.unfold}<span><u>U</u>nfold</span><span>Sheetmetal</span></BigButton>
            <BigButton $w={63}>{big.refold}<span><u>R</u>efold</span><span>Sheetmetal</span></BigButton>
          </GroupBody>
          <GroupLabel>Unfold/Fold</GroupLabel>
        </RibbonGroup>
        <RibbonGroup $w={385}>
          <GroupBody $left={4}>
            <BigButton $w={46}>{big.loft}<span>Create</span><span><u>L</u>oft</span></BigButton>
            <BigButton $w={48}>{big.sketched}<span>Sketched</span><span>Bend</span></BigButton>
            <BigButton $w={68}>{big.cut}<span>Cut</span><span>Sheetmetal</span></BigButton>
            <BigButton $w={44}>{big.forming}<span><u>F</u>orming</span><span>Tool</span></BigButton>
            <BigButton $w={46}>{big.notch}<span>Bend</span><span>Notch</span></BigButton>
            <BigButton $w={41}>{big.punch}<span>Punch</span><span>Bend</span></BigButton>
            <BigButton $w={42}>{big.unfoldBend}<span>Unfold</span><span>Bend</span></BigButton>
            <BigButton $w={42}>{big.refoldBend}<span>Refold</span><span>Bend</span></BigButton>
          </GroupBody>
          <GroupLabel>Operations</GroupLabel>
        </RibbonGroup>
        <RibbonGroup $w={179}>
          <GroupBody $left={7}>
            <BigButton $w={42}>{big.relief}<span>Corner</span><span>Relief</span></BigButton>
            <BigButton $w={42}>{big.closed}<span>Add</span><span>Closed</span></BigButton>
            <BigButton $w={41}>{big.miter}<span>Add</span><span>Miter</span></BigButton>
            <BigButton $w={44}>{big.corner}<span>Corner</span><span>Break</span></BigButton>
          </GroupBody>
          <GroupLabel>Corners</GroupLabel>
        </RibbonGroup>
        <RibbonGroup $w={288}>
          <GroupBody $left={7}>
            <BigButton $w={102}>{big.flat}<span>Solid/Surface Flat</span><span><u>P</u>attern from Faces</span></BigButton>
            <BigButton $w={88}>{big.convert}<span>Convert to</span><span>Sheetmetal part</span></BigButton>
            <BigButton $w={86}>{big.solid}<span>Solid part to</span><span>Sheetmetal part</span></BigButton>
          </GroupBody>
          <GroupLabel>Solid/Surface</GroupLabel>
        </RibbonGroup>
        <RibbonGroup $w={164}>
          <GroupBody $left={8}>
            <BigButton $w={44}>{big.triball}<span><u>T</u>riBall</span></BigButton>
            <SmallColumn>
              <SmallButton><Small kind="pattern" />Pattern Feature</SmallButton>
              <SmallButton><Small kind="mirror" /><span><u>M</u>irror Feature</span></SmallButton>
              <SmallButton><Small kind="trim" /><span><u>T</u>rim</span></SmallButton>
            </SmallColumn>
          </GroupBody>
          <GroupLabel>Solid/Surface</GroupLabel>
        </RibbonGroup>
      </Ribbon>

      <DocBar>
        <DocTab $w={110} $pad={12}><span>lesson 16 demo*</span></DocTab>
        <DocTab $w={98} $active $pad={20}>
          <span>lesson 16</span>
          <DocClose><Cross s={8} w={1.600} c="#444" /></DocClose>
        </DocTab>
        <DocMenu />
      </DocBar>

      <Main>
        <Dock>
          <SideBar>
            <SideDots />
            {sideTop.map((ic, i) => <SideSlot key={i}>{ic}</SideSlot>)}
            <SideRule />
            {sideMid.map((ic, i) => <SideSlot key={i}>{ic}</SideSlot>)}
            <SideArrow $h={12} />
            <SideDots $h={7} $top={6} />
            {sideCubes.map((on, i) => <SideSlot key={i}><Cube on={on} /></SideSlot>)}
            <SideArrow $h={10} />
            <SideDots $h={6} $top={6} />
            {dimIcons.map((ic, i) => <SideSlot key={i}>{ic}</SideSlot>)}
            <SideRule />
            <SideSlot>
              <Box><path d="M1 14l5-6 3-1" stroke="#ccc" fill="none" /><text x="10" y="8" fontSize="8" fontFamily="Liberation Sans, sans-serif" fill="#bbb">A</text></Box>
            </SideSlot>
            <SideSlot>
              <Box><path d="M4 0h8v16H4z" fill="#dcdcdc" /></Box>
            </SideSlot>
            <SideArrow />
          </SideBar>

          <Panel>
            <PanelHead>
              <PanelName>Properties</PanelName>
              <PanelTools>
                <Caret $w={10} $size={4} $color="#666" />
                <svg width="9" height="11" viewBox="0 0 9 11" fill="none" stroke="#666"><path d="M2 1h5v5H2zM0 6h9M4.500 6v5" /></svg>
                <Cross s={9} w={1.600} c="#666" />
              </PanelTools>
            </PanelHead>
            <ConfirmRow>
              <Tick />
              <Cross />
              <svg width="13" height="13" viewBox="0 0 13 13"><circle cx="6.500" cy="6.500" r="3.600" fill="#0808c8" /></svg>
            </ConfirmRow>
            <PanelBody>
              <Section $h={25} $color="#e81010">
                <Tri><svg width="5" height="8" viewBox="0 0 5 8" fill="#fff" stroke="#aaa"><path d="M.5.500l4 3.500-4 3.500z" /></svg></Tri>
                Unfold
              </Section>
              <Section $h={22} $color="#0b68d8">
                <Tri><svg width="5" height="8" viewBox="0 0 5 8" fill="#aaa"><path d="M5 2v5H0z" /></svg></Tri>
                Face Selection
              </Section>
              <SelectBox>
                <SelectTools>
                  <SelectDelete><Cross s={12} w={1.900} c="#e02020" /></SelectDelete>
                </SelectTools>
                <SelectList>
                  <SelectRow><span>1</span><span>Part2\Face&lt;6&gt;</span></SelectRow>
                </SelectList>
              </SelectBox>
              <OptionRow $h={22}>
                <CheckBox>
                  <svg width="11" height="11" viewBox="0 0 11 11"><path d="M2 5.500l2.500 2.500L9 2.500" fill="none" stroke="#222" strokeWidth="1.300" /></svg>
                </CheckBox>
                Auto Select Connected Faces
              </OptionRow>
              <OptionRow $h={20}><Radio />Standard Stock</OptionRow>
              <FieldRow $h={30}>
                <FieldName $muted>Cold Rolled Steel - 24</FieldName>
                <GreyButton>Change Stock</GreyButton>
              </FieldRow>
              <OptionRow $h={21}><Radio $on />Custom Stock</OptionRow>
              <FieldRow $h={25}>
                <FieldName>Thickness</FieldName>
                <FieldInput>1</FieldInput>
              </FieldRow>
              <FieldRow $h={35}>
                <FieldName>k-factor</FieldName>
                <FieldInput>0.333</FieldInput>
              </FieldRow>
              <OptionRow $h={20}><CheckBox />Use DIN 6935 computed k-factor</OptionRow>
              <FieldRow $h={26}>
                <FieldName $left={0}>Number of Virtual Bend ...</FieldName>
                <FieldInput>5</FieldInput>
              </FieldRow>
            </PanelBody>
            <DockTabs>
              <DockTab $w={59} $left={5} $gap={2}>
                <svg width="14" height="16" viewBox="0 0 14 16" fill="none" stroke="#8fb3c2"><path d="M7 1L2 15h10zM4 10h6M7 1v14" /></svg>
                Scene
              </DockTab>
              <DockTab $w={81} $left={5} $active>
                <svg width="13" height="16" viewBox="0 0 13 16"><path d="M.5.500h12v15H.5z" fill="#fff" stroke="#888" /><path d="M2 2h8v5H2z" fill="#2f6aa8" /><path d="M3 10h7M5 13h5" stroke="#777" /></svg>
                Properties
              </DockTab>
              <DockTab $w={80} $left={5} $gap={2}>
                <svg width="16" height="16" viewBox="0 0 16 16"><circle cx="6" cy="6" r="5" fill="#eaf3fb" stroke="#8fb3cf" /><path d="M10 10l5 5" stroke="#888" strokeWidth="2" /></svg>
                Search
              </DockTab>
            </DockTabs>
          </Panel>
        </Dock>
        <Viewport><Model /></Viewport>
      </Main>

      <ShapesBar>
        <svg width="14" height="14" viewBox="0 0 14 14"><path d="M.5 1.500h11v12H.5z" fill="#f7f7f7" stroke="#777" /><path d="M3 4h2v2H3zM7 4h2v2H7zM3 8h2v2H3zM7 8h2v2H7z" fill="#888" /></svg>
        Shapes
      </ShapesBar>

      <StatusBar>
        <StatusText $w={1128}>For Help, press F1</StatusText>
        <StatusText $w={140}>View size: 1596 x&nbsp; 804</StatusText>
        <StatusSlot $w={11}><Box s={10}><path d="M4 0h8v16H4z" fill="#dcdcdc" /></Box></StatusSlot>
        <StatusText $w={43} $muted>Units:</StatusText>
        <StatusText $w={60}>mm, deg</StatusText>
        <StatusSlot $w={16}>{statusIcon.mag}</StatusSlot>
        <StatusSlot $w={32}>{statusIcon.mag}</StatusSlot>
        <Caret $w={6} />
        <StatusSlot $w={26}>{statusIcon.box}</StatusSlot>
        <Caret $w={12} />
        <StatusSlot $w={22}>{statusIcon.blue}</StatusSlot>
        <Caret $w={14} />
        <StatusSlot $w={24}>{statusIcon.person}</StatusSlot>
        <Caret $w={10} />
        <StatusSlot $w={24} $on>{statusIcon.slant}</StatusSlot>
        <StatusSlot $w={22}>{statusIcon.glass}</StatusSlot>
        <Caret $w={4} />
        <StatusSlot $w={30}>{statusIcon.solid}</StatusSlot>
        <Caret $w={4} />
        <StatusSlot $w={30}>{statusIcon.ghost}</StatusSlot>
        <Caret $w={4} $color="#bbb" />
        <StatusSlot $w={28}>{statusIcon.fade}</StatusSlot>
        <StatusSlot $w={23} $on>{statusIcon.arrow}</StatusSlot>
        <StatusSlot $w={24}>{statusIcon.arrow2}</StatusSlot>
        <Combo $w={90}>Face<Caret $w={6} /></Combo>
        <Combo $w={65} $join>Default<Caret $w={6} /></Combo>
        <StatusSlot $w={22}>{statusIcon.tree}</StatusSlot>
      </StatusBar>
      <Taskbar />
    </Page>
  )
}
